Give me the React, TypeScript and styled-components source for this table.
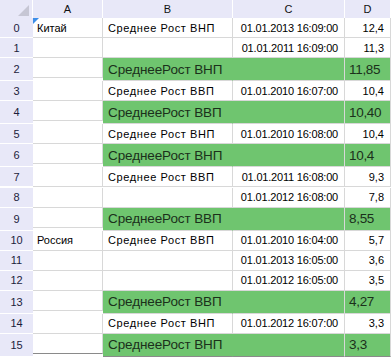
import React from 'react'
import styled, { createGlobalStyle } from 'styled-components'

const GlobalStyle = createGlobalStyle`
  html, body {
    margin: 0;
    padding: 0;
    background: #ffffff;
  }
  body {
    font-family: 'Liberation Sans', Arial, sans-serif;
  }
`

type Row = {
  a?: string
  b?: string
  c?: string
  d: string
  total?: boolean
}

const rows: Row[] = [
  { a: 'Китай', b: 'Среднее Рост ВНП', c: '01.01.2013 16:09:00', d: '12,4' },
  { c: '01.01.2011 16:09:00', d: '11,3' },
  { total: true, b: 'СреднееРост ВНП', d: '11,85' },
  { b: 'Среднее Рост ВВП', c: '01.01.2010 16:07:00', d: '10,4' },
  { total: true, b: 'СреднееРост ВВП', d: '10,40' },
  { b: 'Среднее Рост ВНП', c: '01.01.2010 16:08:00', d: '10,4' },
  { total: true, b: 'СреднееРост ВНП', d: '10,4' },
  { b: 'Среднее Рост ВВП', c: '01.01.2011 16:08:00', d: '9,3' },
  { c: '01.01.2012 16:08:00', d: '7,8' },
  { total: true, b: 'СреднееРост ВВП', d: '8,55' },
  { a: 'Россия', b: 'Среднее Рост ВВП', c: '01.01.2010 16:04:00', d: '5,7' },
  { c: '01.01.2013 16:05:00', d: '3,6' },
  { c: '01.01.2012 16:05:00', d: '3,5' },
  { total: true, b: 'СреднееРост ВВП', d: '4,27' },
  { b: 'Среднее Рост ВНП', c: '01.01.2012 16:07:00', d: '3,3' },
  { total: true, b: 'СреднееРост ВНП', d: '3,3' },
]

const columns = ['A', 'B', 'C', 'D']

const Sheet = styled.div`
  display: grid;
  grid-template-columns: 33px 70px 130px 112px 46px;
  width: 391px;
  height: 357px;
  overflow: hidden;
  font-size: 11px;
  color: #000;
`

const Corner = styled.div`
  position: relative;
  height: 18px;
  background: #e8e8f8;
  border-right: 1px solid #ffffff;
  box-sizing: border-box;

  &::after {
    content: '';
    position: absolute;
    right: 3px;
    bottom: 2px;
    border-style: solid;
    border-width: 0 0 11px 11px;
    border-color: transparent transparent #c6c6d4 transparent;
  }
`

const ColHead = styled.div`
  height: 18px;
  display: flex;
  align-items: center;
  justify-content: center;
  background: #e8e8f8;
  border-right: 1px solid #ffffff;
  box-sizing: border-box;
  color: #111;
`

const RowHead = styled.div<{ $tall: boolean }>`
  height: ${({ $tall }) => ($tall ? 23 : 20)}px;
  display: flex;
  align-items: center;
  justify-content: center;
  background: #e8e8f8;
  border-bottom: 1px solid #ffffff;
  box-sizing: border-box;
  color: #1c1c3c;
`

const Cell = styled.div<{ $total: boolean; $align?: 'left' | 'right'; $last?: boolean; $join?: boolean }>`
  position: relative;
  height: ${({ $total }) => ($total ? 23 : 20)}px;
  display: flex;
  align-items: center;
  justify-content: ${({ $align }) => ($align === 'right' ? 'flex-end' : 'flex-start')};
  padding: ${({ $align }) => ($align === 'right' ? '0 6px 0 0' : '0 0 0 4px')};
  box-sizing: border-box;
  white-space: nowrap;
  overflow: visible;
  background: ${({ $total }) => ($total ? '#6fc56f' : '#ffffff')};
  border-right: 1px solid ${({ $join }) => ($join ? '#6fc56f' : '#d8d8d8')};
  border-bottom: 1px solid ${({ $last }) => ($last ? '#8a8a8a' : '#d8d8d8')};
  color: ${({ $total }) => ($total ? '#1b301b' : '#000')};
  font-size: ${({ $total }) => ($total ? '13.5px' : '11px')};
`

const Marker = styled.span`
  position: absolute;
  left: 0;
  top: 0;
  border-style: solid;
  border-width: 6px 6px 0 0;
  border-color: #3d8ee8 transparent transparent transparent;
`

const Label = styled.span<{ $total: boolean }>`
  padding-left: 1px;
  letter-spacing: ${({ $total }) => ($total ? '-0.1px' : '0.6px')};
`

const Stamp = styled.span`
  letter-spacing: -0.2px;
`

const Amount = styled.span<{ $total: boolean }>`
  letter-spacing: ${({ $total }) => ($total ? '-0.3px' : '0')};
`

export default function App() {
  return (
    <>
      <GlobalStyle />
      <Sheet>
        <Corner />
        {columns.map((c) => (
          <ColHead key={c}>{c}</ColHead>
        ))}
        {rows.map((r, i) => {
          const t = !!r.total
          const last = i === rows.length - 1
          return (
            <React.Fragment key={i}>
              <RowHead $tall={t}>{i}</RowHead>
              <Cell $total={false} $last={last}>
                {i === 0 && <Marker />}
                {r.a}
              </Cell>
              <Cell $total={t} $last={last} $join={t}>
                <Label $total={t}>{r.b}</Label>
              </Cell>
              <Cell $total={t} $last={last} $align="right">
                <Stamp>{r.c}</Stamp>
              </Cell>
              <Cell $total={t} $last={last} $align={t ? 'left' : 'right'}>
                <Amount $total={t}>{r.d}</Amount>
              </Cell>
            </React.Fragment>
          )
        })}
      </Sheet>
    </>
  )
}
